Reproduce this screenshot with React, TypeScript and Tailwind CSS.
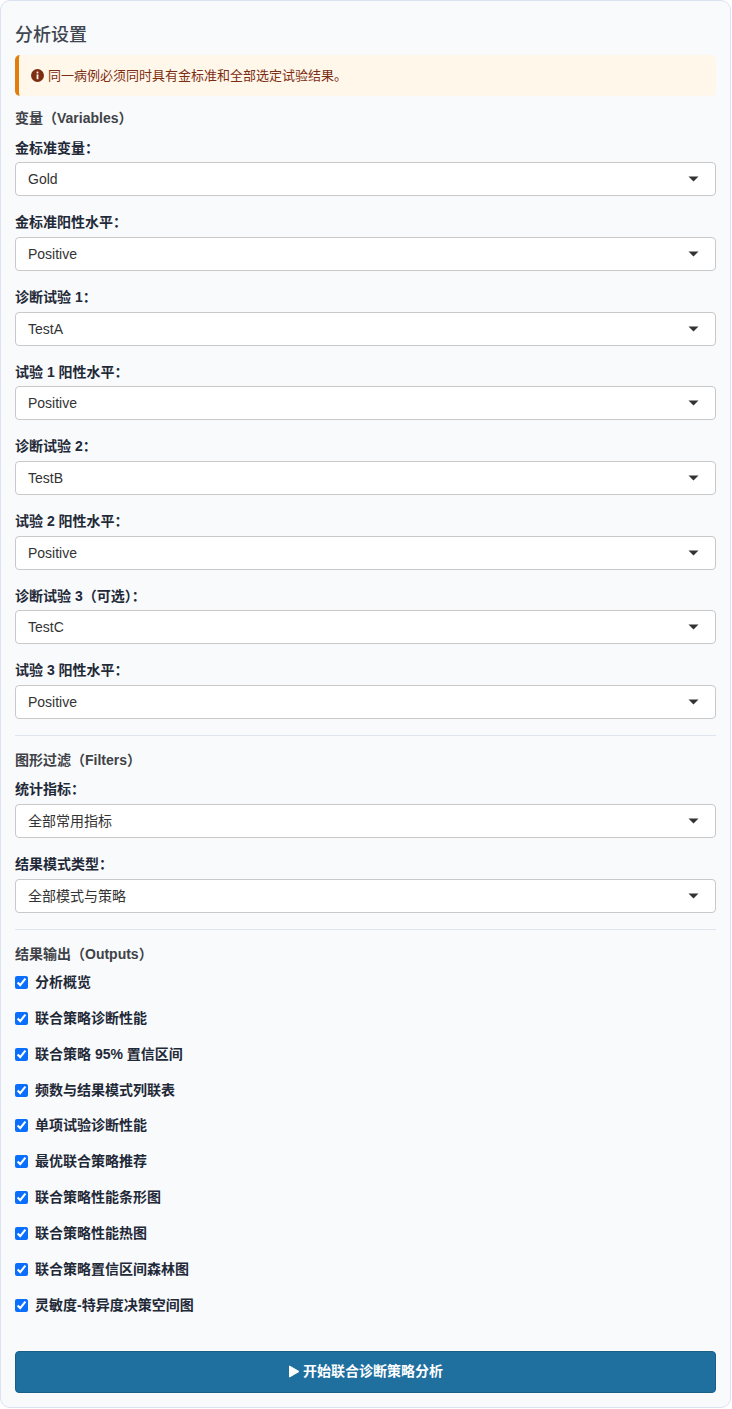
import React from 'react';

const font = { fontFamily: '"Liberation Sans", "Noto Sans CJK SC", sans-serif' };

const Select: React.FC<{ label: string; value: string }> = ({ label, value }) => (
  <div className="mb-[15px]">
    <label className="block h-[25.7px] pt-[2px] text-[14px] leading-[19px] font-bold text-[#1f2937]">{label}</label>
    <div className="flex h-[34px] items-center justify-between rounded-[4px] border border-[#c9c9c9] bg-white pl-[12px] pr-[16px] text-[14px] text-[#333333]">
      <span className="pt-[1px]">{value}</span>
      <svg width="11" height="6" viewBox="0 0 11 6">
        <path d="M0.5 0.5 H10.5 L5.5 5.5 Z" fill="#333333" />
      </svg>
    </div>
  </div>
);

const Section: React.FC<{ children: React.ReactNode }> = ({ children }) => (
  <div className="h-[20px] text-[14px] leading-[20px] font-bold text-[#3f4247]">{children}</div>
);

const Check: React.FC<{ label: string }> = ({ label }) => (
  <label className="flex h-[35.9px] items-start gap-[7px] text-[14px] leading-[19px] font-bold text-[#1f2937]">
    <input type="checkbox" defaultChecked className="mt-[3px] h-[13px] w-[13px] accent-[#0b6ffd]" />
    <span>{label}</span>
  </label>
);

const App: React.FC = () => {
  const outputs = [
    '分析概览',
    '联合策略诊断性能',
    '联合策略 95% 置信区间',
    '频数与结果模式列联表',
    '单项试验诊断性能',
    '最优联合策略推荐',
    '联合策略性能条形图',
    '联合策略性能热图',
    '联合策略置信区间森林图',
    '灵敏度-特异度决策空间图',
  ];

  return (
    <div style={font} className="h-[1409px] w-[732px] bg-white">
      <div className="h-[1408px] w-[731px] rounded-[10px] border border-[#dbe3f0] bg-[#f8fafc] px-[14px] pt-[22px]">
        <h2 className="h-[32px] text-[18px] leading-[24px] font-medium text-[#3f4650]">分析设置</h2>

        {/* Notice */}
        <div className="flex h-[41px] items-center gap-[4px] rounded-[5px] border-l-[4px] border-[#e07f0b] bg-[#fff7ea] pl-[12px] text-[13px] text-[#7c2d12]">
          <svg width="13" height="13" viewBox="0 0 13 13">
            <circle cx="6.5" cy="6.5" r="6.5" fill="#7c2d12" />
            <rect x="5.6" y="2.6" width="1.8" height="1.8" fill="#fff7ea" />
            <rect x="5.6" y="5.4" width="1.8" height="4.8" fill="#fff7ea" />
          </svg>
          <span>同一病例必须同时具有金标准和全部选定试验结果。</span>
        </div>

        <div className="mt-[12px] pb-[0.9px]">
          <Section>变量（Variables）</Section>
          <div className="mt-[8.5px]">
            <Select label="金标准变量：" value="Gold" />
            <Select label="金标准阳性水平：" value="Positive" />
            <Select label="诊断试验 1：" value="TestA" />
            <Select label="试验 1 阳性水平：" value="Positive" />
            <Select label="诊断试验 2：" value="TestB" />
            <Select label="试验 2 阳性水平：" value="Positive" />
            <Select label="诊断试验 3（可选）：" value="TestC" />
            <Select label="试验 3 阳性水平：" value="Positive" />
          </div>
        </div>

        <hr className="border-[#dfe5ee]" />

        <div className="mt-[14px] pb-[1.3px]">
          <Section>图形过滤（Filters）</Section>
          <div className="mt-[8.3px]">
            <Select label="统计指标：" value="全部常用指标" />
            <Select label="结果模式类型：" value="全部模式与策略" />
          </div>
        </div>

        <hr className="border-[#dfe5ee]" />

        <div className="mt-[14px]">
          <Section>结果输出（Outputs）</Section>
          <div className="mt-[9px]">
            {outputs.map((o) => (
              <Check key={o} label={o} />
            ))}
          </div>
        </div>

        <button className="mt-[19px] flex h-[42px] w-full items-center justify-center gap-[3px] rounded-[4px] border border-[#1a5f88] bg-[#1f6f9f] text-[14px] font-bold text-white">
          <svg width="12" height="13" viewBox="0 0 12 13">
            <path d="M1.5 1 L11 6.5 L1.5 12 Z" fill="#ffffff" stroke="#ffffff" strokeLinejoin="round" />
          </svg>
          <span>开始联合诊断策略分析</span>
        </button>
      </div>
    </div>
  );
};

export default App;
